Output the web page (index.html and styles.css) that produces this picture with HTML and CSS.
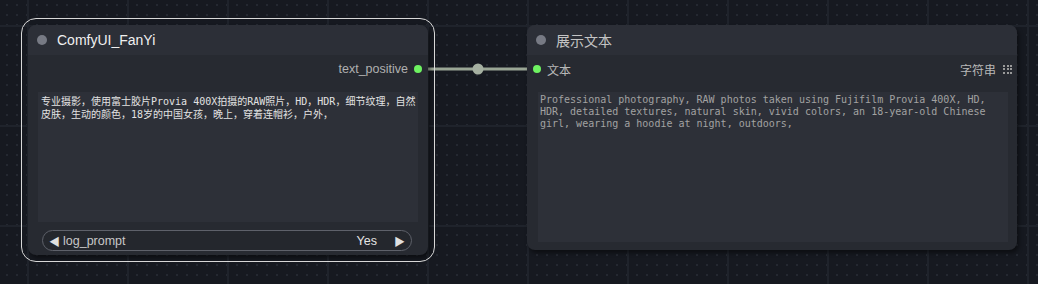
FILE: index.html
```html
<!DOCTYPE html>
<html lang="en">
<head>
    <meta charset="UTF-8">
    <title>ComfyUI Graph</title>
    <link rel="stylesheet" href="styles.css">
</head>
<body>
    <div class="canvas">
        <!-- Link between the two nodes -->
        <svg class="link" width="1038" height="284" viewBox="0 0 1038 284">
            <line x1="420" y1="69" x2="536" y2="69" stroke="#9aa695" stroke-width="3"/>
            <circle cx="478" cy="69" r="5.5" fill="#a5b0a1"/>
        </svg>

        <!-- Translate node (selected) -->
        <div class="node node-fanyi selected">
            <div class="node-title">
                <span class="title-dot"></span>
                <span class="title-text">ComfyUI_FanYi</span>
            </div>
            <div class="slot-row">
                <span class="slot-spacer"></span>
                <span class="slot-label">text_positive</span>
                <span class="slot-dot out"></span>
            </div>
            <div class="textarea cjk">专业摄影，使用富士胶片Provia 400X拍摄的RAW照片，HD，HDR，细节纹理，自然皮肤，生动的颜色，18岁的中国女孩，晚上，穿着连帽衫，户外，</div>
            <div class="combo">
                <span class="arrow">&#9664;</span>
                <span class="combo-name">log_prompt</span>
                <span class="combo-value">Yes</span>
                <span class="arrow">&#9654;</span>
            </div>
        </div>

        <!-- Show text node -->
        <div class="node node-show">
            <div class="node-title">
                <span class="title-dot"></span>
                <span class="title-text dim">展示文本</span>
            </div>
            <div class="slot-row input">
                <span class="slot-dot in"></span>
                <span class="slot-label">文本</span>
                <span class="slot-spacer"></span>
                <span class="slot-type">字符串</span>
                <span class="grid-icon">
                    <i></i><i></i><i></i><i></i><i></i><i></i><i></i><i></i><i></i>
                </span>
            </div>
            <div class="textarea mono">Professional photography, RAW photos taken using Fujifilm Provia 400X, HD, HDR, detailed textures, natural skin, vivid colors, an 18-year-old Chinese girl, wearing a hoodie at night, outdoors,</div>
        </div>
    </div>
</body>
</html>
```

FILE: styles.css
```css
/* Page and canvas */
body {
    margin: 0;
    background: #161920;
    font-family: "Liberation Sans", Arial, "Noto Sans CJK SC", sans-serif;
}

.canvas {
    position: relative;
    width: 1038px;
    height: 284px;
    overflow: hidden;
    background-color: #161920;
    background-image:
        linear-gradient(to right, #1f232b 0, #1f232b 2px, transparent 2px),
        linear-gradient(to bottom, #1f232b 0, #1f232b 2px, transparent 2px),
        radial-gradient(circle at 1px 1px, #242831 1px, transparent 1.2px);
    background-size: 100px 100px, 100px 100px, 10px 10px;
    background-position: 27px 0, 0 25px, 6px 4px;
}

.link {
    position: absolute;
    left: 0;
    top: 0;
}

/* Node shell */
.node {
    position: absolute;
    display: flex;
    flex-direction: column;
    background: #272a31;
    border-radius: 8px;
    box-shadow: 2px 3px 4px rgba(0, 0, 0, 0.45);
}

.node-fanyi {
    left: 28px;
    top: 25px;
    width: 400px;
    height: 230px;
}

.node-show {
    left: 527px;
    top: 25px;
    width: 490px;
    height: 225px;
}

.selected {
    outline: 1.5px solid #d8d8d8;
    outline-offset: 6px;
}

/* Title bar */
.node-title {
    display: flex;
    align-items: center;
    height: 30px;
    padding-left: 9px;
    background: #2c2f37;
    border-radius: 8px 8px 0 0;
}

.title-dot {
    width: 10px;
    height: 10px;
    border-radius: 50%;
    background: #777a84;
    margin-right: 10px;
}

.title-text {
    color: #f0f0f0;
    font-size: 14px;
}

.title-text.dim {
    color: #c4c4c4;
    font-size: 14px;
    font-family: "Noto Sans CJK SC", sans-serif;
}

/* Slots */
.slot-row {
    display: flex;
    align-items: center;
    height: 28px;
    padding: 0 6px 0 0;
    margin-bottom: 9px;
    font-size: 12.5px;
    color: #b0b0b0;
}

.slot-row.input {
    padding: 0 5px 0 6px;
}

.slot-spacer {
    flex: 1;
}

.slot-dot {
    width: 8px;
    height: 8px;
    border-radius: 50%;
    background: #6ef261;
}

.slot-dot.out {
    margin-left: 6px;
}

.slot-dot.in {
    margin-right: 6px;
}

.slot-row.input .slot-label,
.slot-type {
    font-family: "Noto Sans CJK SC", sans-serif;
    font-size: 12px;
    color: #b8b8b8;
}

.grid-icon {
    display: grid;
    grid-template-columns: repeat(3, 2px);
    gap: 1.5px;
    margin-left: 7px;
}

.grid-icon i {
    width: 2px;
    height: 2px;
    background: #9a9a9a;
}

/* Text areas */
.textarea {
    background: #2d3038;
    font-family: "DejaVu Sans Mono", "Noto Sans CJK SC", monospace;
    font-size: 10px;
    white-space: pre-wrap;
    word-break: break-all;
}

.textarea.cjk {
    margin: 0 10px;
    height: 130px;
    padding: 3px 2px 0 3px;
    line-height: 13px;
    color: #e2e2e2;
    box-sizing: border-box;
}

.textarea.mono {
    margin: 0 9px 0 11px;
    height: 150px;
    padding: 2px 2px 0 2px;
    line-height: 12px;
    color: #a2a2a2;
    word-break: normal;
    box-sizing: border-box;
}

/* Combo widget */
.combo {
    display: flex;
    align-items: center;
    height: 21px;
    margin: 8px 16px 0 14px;
    padding: 0 6px 0 6px;
    border: 1px solid #5e616a;
    border-radius: 11px;
    background: #24272d;
    box-sizing: border-box;
    font-size: 12.5px;
    color: #c8c8c8;
}

.arrow {
    color: #e0e0e0;
    font-size: 11px;
}

.combo-name {
    flex: 1;
    margin-left: 3px;
}

.combo-value {
    color: #e4e4e4;
    margin-right: 17px;
}
```
